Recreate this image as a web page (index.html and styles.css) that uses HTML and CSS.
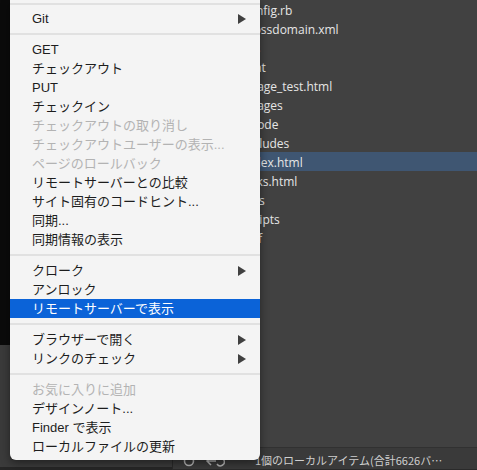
FILE: index.html
```html
<!DOCTYPE html>
<html lang="ja">
<head>
<meta charset="utf-8">
<title>Context menu</title>
<link rel="stylesheet" href="styles.css">
</head>
<body>
<div class="app">
  <div class="side">
    <div class="side-top"></div>
    <div class="side-bottom"></div>
  </div>
  <div class="main">
    <ul class="files">
      <li>config.rb</li>
      <li>crossdomain.xml</li>
      <li>css</li>
      <li>font</li>
      <li>image_test.html</li>
      <li>images</li>
      <li>imode</li>
      <li>includes</li>
      <li class="selected">index.html</li>
      <li>links.html</li>
      <li>pics</li>
      <li>scripts</li>
      <li>swf</li>
    </ul>
    <div class="status">
      <svg class="st-icon" width="12" height="12" viewBox="0 0 12 12"><circle cx="6" cy="6" r="4.5" fill="none" stroke="#b4b4b4" stroke-width="1.6"/></svg>
      <svg class="st-icon2" width="20" height="12" viewBox="0 0 20 12"><path d="M6 2 L2 6 L6 10 M2 6 H11 M14 3 A4 4 0 1 1 12 9" fill="none" stroke="#b4b4b4" stroke-width="1.5"/></svg>
      <span class="st-text">1個のローカルアイテム(合計6626バ…</span>
    </div>
  </div>

  <div class="menu">
    <div class="sep first"></div>
    <div class="item sub"><span>Git</span><i class="arrow"></i></div>
    <div class="sep"></div>
    <div class="item"><span>GET</span></div>
    <div class="item"><span>チェックアウト</span></div>
    <div class="item"><span>PUT</span></div>
    <div class="item"><span>チェックイン</span></div>
    <div class="item disabled"><span>チェックアウトの取り消し</span></div>
    <div class="item disabled"><span>チェックアウトユーザーの表示...</span></div>
    <div class="item disabled"><span>ページのロールバック</span></div>
    <div class="item"><span>リモートサーバーとの比較</span></div>
    <div class="item"><span>サイト固有のコードヒント...</span></div>
    <div class="item"><span>同期...</span></div>
    <div class="item"><span>同期情報の表示</span></div>
    <div class="sep"></div>
    <div class="item sub"><span>クローク</span><i class="arrow"></i></div>
    <div class="item"><span>アンロック</span></div>
    <div class="item active"><span>リモートサーバーで表示</span></div>
    <div class="sep"></div>
    <div class="item sub"><span>ブラウザーで開く</span><i class="arrow"></i></div>
    <div class="item sub"><span>リンクのチェック</span><i class="arrow"></i></div>
    <div class="sep"></div>
    <div class="item disabled"><span>お気に入りに追加</span></div>
    <div class="item"><span>デザインノート...</span></div>
    <div class="item"><span>Finder で表示</span></div>
    <div class="item"><span>ローカルファイルの更新</span></div>
  </div>
</div>
</body>
</html>
```
FILE: styles.css
```css
html, body {
  margin: 0;
  padding: 0;
  width: 477px;
  height: 470px;
  overflow: hidden;
  background: #414141;
}

.app {
  position: relative;
  display: flex;
  width: 477px;
  height: 470px;
  font-family: "Liberation Sans", "Noto Sans CJK JP", sans-serif;
}

.side {
  width: 172px;
  display: flex;
  flex-direction: column;
}

.side-top {
  height: 345px;
  background: #0b0b0b;
}

.side-bottom {
  flex: 1;
  background: #3b3b3b;
  border-bottom: 3px solid #262626;
}

.main {
  flex: 1;
  display: flex;
  flex-direction: column;
  background: #414141;
}

.files {
  flex: 1;
  list-style: none;
  margin: 0;
  padding: 0;
  font-family: "Open Sans", "Noto Sans CJK JP", sans-serif;
  font-size: 12px;
  color: #e6e6e6;
}

.files li {
  height: 19px;
  line-height: 21px;
  padding-left: 71px;
  white-space: nowrap;
}

.files li.selected {
  background: #3f5672;
}

.status {
  height: 21px;
  display: flex;
  align-items: center;
  background: #3a3a3a;
  border-top: 1px solid #313131;
  border-left: 1px solid #2a2a2a;
  border-bottom: 1px solid #2a2a2a;
  color: #cfcfcf;
  font-size: 11px;
  font-family: "Noto Sans CJK JP", sans-serif;
}

.st-icon {
  margin-left: 10px;
  margin-top: 4px;
}

.st-icon2 {
  margin-left: 10px;
  margin-top: 4px;
}

.st-text {
  margin-left: 30px;
  margin-top: 3px;
  white-space: nowrap;
}

.menu {
  position: absolute;
  left: 10px;
  top: 0;
  width: 250px;
  padding-bottom: 4px;
  background: #f4f4f4;
  border-radius: 0 0 6px 6px;
  box-shadow: 0 3px 10px rgba(0, 0, 0, 0.45);
  font-size: 13px;
  color: #1d1d1d;
}

.sep {
  height: 2px;
  background: #e1e1e1;
  margin: 5px 0;
}

.sep.first {
  margin: 3px 0 4px;
}

.item {
  height: 19px;
  line-height: 19px;
  padding: 0 14px 0 22px;
  display: flex;
  justify-content: space-between;
  align-items: center;
  white-space: nowrap;
}

.item.disabled {
  color: #b3b3b3;
}

.item.active {
  background: #0b63d8;
  color: #ffffff;
}

.arrow {
  width: 0;
  height: 0;
  border-left: 8px solid #404040;
  border-top: 5px solid transparent;
  border-bottom: 5px solid transparent;
}
```
